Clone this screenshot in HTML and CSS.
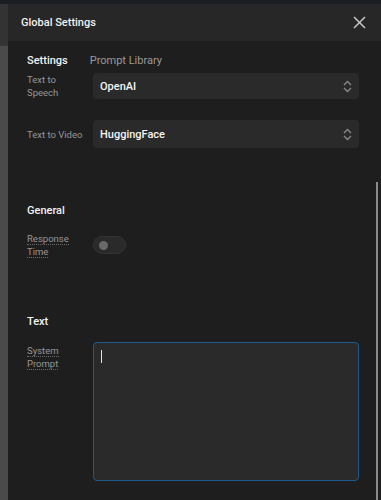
FILE: index.html
```html
<!DOCTYPE html>
<html lang="en">
  <head>
    <meta charset="UTF-8">
    <meta name="viewport" content="width=device-width, initial-scale=1.0">
    <title>Global Settings</title>
    <link rel="stylesheet" href="styles.css">
  </head>
  <body>
    <div class="page">
      <div class="side-strip"></div>

      <div class="modal">
        <div class="modal-header">
          <h2>Global Settings</h2>
          <button class="close-btn" aria-label="Close">
            <svg width="13" height="13" viewBox="0 0 13 13">
              <path d="M1 1 L12 12 M12 1 L1 12" stroke="#c8c8c8" stroke-width="1.5" fill="none"/>
            </svg>
          </button>
        </div>

        <div class="modal-content">
          <div class="tabs">
            <span class="tab active">Settings</span>
            <span class="tab">Prompt Library</span>
          </div>

          <div class="row row-first">
            <label class="field-label">Text to<br>Speech</label>
            <div class="select">
              <span>OpenAI</span>
              <svg width="9" height="13" viewBox="0 0 9 13">
                <path d="M1 5 L4.5 1.5 L8 5 M1 8 L4.5 11.5 L8 8" stroke="#8a8a8a" stroke-width="1.3" fill="none"/>
              </svg>
            </div>
          </div>

          <div class="row row-second">
            <label class="field-label">Text to Video</label>
            <div class="select select-tall">
              <span>HuggingFace</span>
              <svg width="9" height="13" viewBox="0 0 9 13">
                <path d="M1 5 L4.5 1.5 L8 5 M1 8 L4.5 11.5 L8 8" stroke="#8a8a8a" stroke-width="1.3" fill="none"/>
              </svg>
            </div>
          </div>

          <h3 class="section-title section-general">General</h3>

          <div class="row row-toggle">
            <label class="field-label hint"><span>Response</span><br><span>Time</span></label>
            <div class="toggle"><span class="knob"></span></div>
          </div>

          <h3 class="section-title section-text">Text</h3>

          <div class="row row-prompt">
            <label class="field-label hint"><span>System</span><br><span>Prompt</span></label>
            <div class="textarea"><span class="caret"></span></div>
          </div>
        </div>

        <div class="scrollbar"></div>
      </div>
    </div>
  </body>
</html>
```

FILE: styles.css
```css
/* dark settings dialog */
body {
  margin: 0;
  background-color: #1b1f24;
  font-family: Roboto, 'Noto Sans', sans-serif;
  color: #fff;
}

.page {
  display: flex;
  height: 500px;
  overflow: hidden;
}

.side-strip {
  width: 8px;
  flex-shrink: 0;
  margin-top: 4px;
  background: linear-gradient(#333 0, #333 42px, #4a4a4a 42px);
}

.modal {
  flex: 1;
  margin-top: 4px;
  background-color: #1e1e1e;
  position: relative;
}

.modal-header {
  height: 37px;
  background-color: #272727;
  display: flex;
  justify-content: space-between;
  align-items: center;
  padding: 0 15px 0 13px;
}

.modal-header h2 {
  margin: 0;
  font-size: 11px;
  font-weight: 500;
  color: #f0f0f0;
}

.close-btn {
  background: none;
  border: none;
  padding: 0;
  width: 14px;
  height: 14px;
  display: flex;
  align-items: center;
  justify-content: center;
  cursor: pointer;
}

.modal-content {
  padding: 0 22px 0 19px;
}

.tabs {
  display: flex;
  gap: 22px;
  margin-top: 12px;
  line-height: 15px;
  font-size: 11px;
}

.tab {
  color: #9a9a9a;
}

.tab.active {
  color: #f2f2f2;
  font-weight: 500;
}

.row {
  display: grid;
  grid-template-columns: 66px 1fr;
  align-items: center;
}

.row-first {
  margin-top: 5px;
}

.row-second {
  margin-top: 21px;
}

.field-label {
  font-size: 9.5px;
  line-height: 13px;
  color: #969696;
}

.hint span {
  border-bottom: 1px dotted #6a6a6a;
}

.select {
  height: 26px;
  background-color: #2a2a2a;
  border-radius: 4px;
  display: flex;
  align-items: center;
  justify-content: space-between;
  padding: 0 7px 0 7px;
  font-size: 11px;
  font-weight: 500;
  color: #f4f4f4;
}

.select-tall {
  height: 28px;
}

.section-title {
  margin: 0;
  font-size: 11px;
  line-height: 15px;
  font-weight: 500;
  color: #f2f2f2;
}

.section-general {
  margin-top: 55px;
}

.section-text {
  margin-top: 56px;
}

.row-toggle {
  margin-top: 14px;
}

.toggle {
  width: 33px;
  height: 18px;
  border-radius: 9px;
  background-color: #2a2a2a;
  border: 1px solid #333;
  box-sizing: border-box;
  display: flex;
  align-items: center;
  padding-left: 5px;
}

.knob {
  width: 9px;
  height: 9px;
  border-radius: 50%;
  background-color: #6a6a6a;
}

.row-prompt {
  margin-top: 13px;
  align-items: start;
}

.row-prompt .field-label {
  margin-top: 2px;
}

.textarea {
  height: 139px;
  box-sizing: border-box;
  border: 1px solid #1d5b8e;
  border-radius: 4px;
  background-color: #2a2a2a;
  padding: 7px 7px;
}

.caret {
  display: block;
  width: 1px;
  height: 13px;
  background-color: #e0e0e0;
}

.scrollbar {
  position: absolute;
  right: 3px;
  top: 178px;
  bottom: 0;
  width: 2px;
  background-color: #8a8a8a;
}
```
